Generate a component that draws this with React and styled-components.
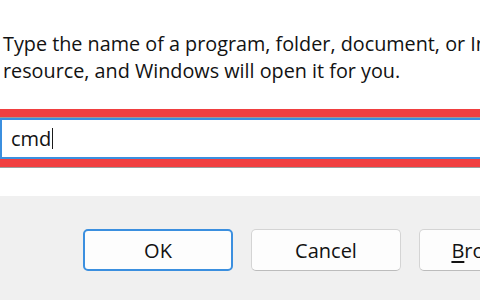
import React from 'react';
import styled, { createGlobalStyle } from 'styled-components';

const GlobalStyle = createGlobalStyle`
	html, body {
		margin: 0;
		padding: 0;
		background: #ffffff;
	}
	body {
		width: 480px;
		height: 300px;
		overflow: hidden;
		font-family: "Open Sans", "Noto Sans", "Liberation Sans", sans-serif;
		color: #121212;
	}
`;

const Dialog = styled.div`
	width: 480px;
	height: 300px;
	display: flex;
	flex-direction: column;
	overflow: hidden;
`;

const Body = styled.div`
	height: 196px;
	background: #ffffff;
	display: flex;
	flex-direction: column;
	padding-top: 30px;
	box-sizing: border-box;
`;

const Prompt = styled.p`
	margin: 0 0 0 3px;
	font-size: 19.8px;
	line-height: 27px;
	white-space: nowrap;
`;

const Highlight = styled.div`
	margin: 25px -20px 0 0;
	border-top: 8px solid #f03f40;
	border-bottom: 8px solid #f03f40;
	padding-top: 1px;
	background: #9a9a9a;
	box-shadow: 0 1px 0 #9c9c9c;
`;

const Field = styled.div`
	height: 37px;
	border: 2px solid #3b8fdf;
	background: #ffffff;
	display: flex;
	align-items: center;
	padding-left: 9px;
	font-size: 20px;
`;

const Caret = styled.span`
	display: inline-block;
	width: 1px;
	height: 21px;
	margin-left: 1px;
	background: #1b1b1b;
`;

const Footer = styled.div`
	flex: 1;
	background: #f0f0f0;
	display: flex;
	gap: 18px;
	padding: 33px 0 0 83px;
`;

const Button = styled.button`
	flex: none;
	width: 150px;
	height: 42px;
	box-sizing: border-box;
	border-radius: 5px;
	background: #fdfdfd;
	font-family: inherit;
	font-size: 20px;
	color: #121212;
	border: ${({ $primary }) => ($primary ? '2px solid #3b8fdf' : '1px solid #d4d4d4')};
	border-bottom-color: ${({ $primary }) => ($primary ? '#3b8fdf' : '#bcbcbc')};
	padding: 0;
	cursor: pointer;

	u {
		text-underline-offset: 3px;
	}
`;

export default function App() {
	return (
		<>
			<GlobalStyle />
			<Dialog>
				<Body>
					<Prompt>Type the name of a program, folder, document, or Internet</Prompt>
					<Prompt>resource, and Windows will open it for you.</Prompt>
					<Highlight>
						<Field>
							cmd<Caret />
						</Field>
					</Highlight>
				</Body>
				<Footer>
					<Button $primary>OK</Button>
					<Button>Cancel</Button>
					<Button>
						<u>B</u>rowse...
					</Button>
				</Footer>
			</Dialog>
		</>
	);
}
